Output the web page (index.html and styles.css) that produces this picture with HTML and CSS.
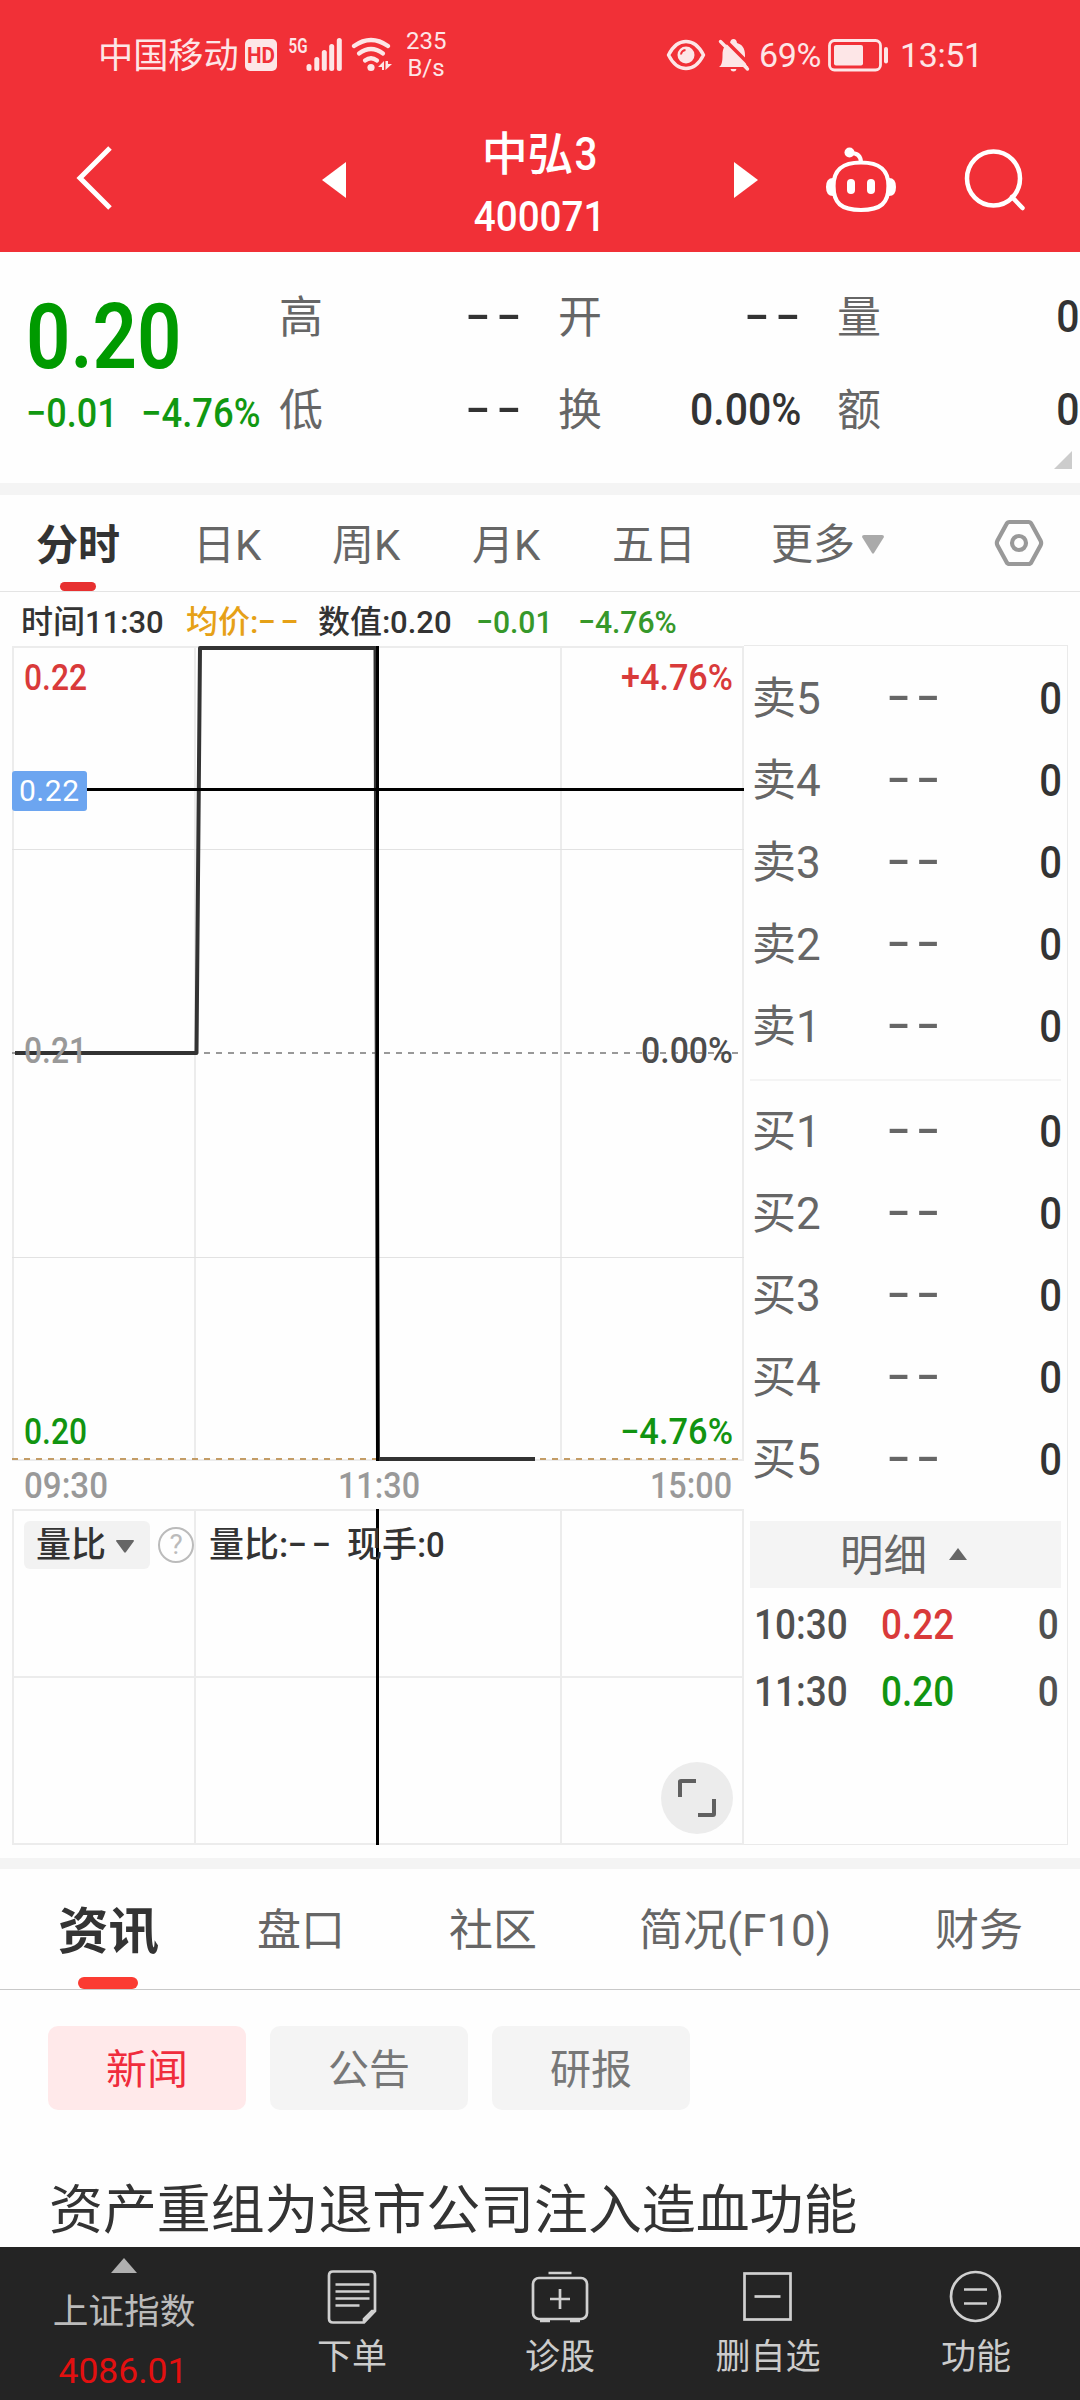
FILE: index.html
```html
<!DOCTYPE html>
<html lang="zh-CN">
<head>
<meta charset="utf-8">
<title>中弘3 400071</title>
<link rel="stylesheet" href="styles.css">
</head>
<body>
<div class="app">
  <header class="header">
    <div class="status">
      <span class="carrier">中国移动</span>
      <svg class="hd" width="34" height="34" viewBox="0 0 34 34"><rect x="1" y="1" width="32" height="32" rx="5" fill="#fde6e7"/><text x="3" y="25" font-size="22" font-weight="700" fill="#f13037" textLength="28" lengthAdjust="spacingAndGlyphs">HD</text></svg>
      <svg class="net" width="106" height="40" viewBox="0 0 106 40" fill="#fde6e7">
        <text x="0.500" y="18" font-size="21" font-weight="600" textLength="19" lengthAdjust="spacingAndGlyphs">5G</text>
        <rect x="18.5" y="29" width="5" height="7" rx="2.5"/><rect x="26.3" y="22" width="5" height="14" rx="2.5"/><rect x="33.8" y="15" width="5" height="21" rx="2.5"/><rect x="41.2" y="9" width="5" height="27" rx="2.5"/><rect x="48.8" y="3" width="5" height="33" rx="2.5"/>
        <g fill="none" stroke="#fde6e7" stroke-width="4.2" stroke-linecap="round"><path d="M66 11Q83 -1 100 11"/><path d="M71 18.5Q83 9.500 95 18.500"/><path d="M77 25.500Q83 21 89 25.500"/></g>
        <circle cx="83" cy="32.500" r="3.600"/><path d="M90 32l6-6v9h-2v-3zM97.500 26v9l6.500-6h-4v-3z"/>
      </svg>
      <span class="speed">235<br>B/s</span>
      <svg class="eye" width="40" height="34" viewBox="0 0 40 34"><path d="M2.500 17C7 8 13 3.500 20 3.500S33 8 37.500 17C33 26 27 30.500 20 30.500S7 26 2.500 17Z" fill="none" stroke="#fde6e7" stroke-width="3.400" stroke-linejoin="round"/><circle cx="20" cy="17" r="8.500" fill="#fde6e7"/><path d="M15 16.500q.5-4 4.500-4.500" fill="none" stroke="#f13037" stroke-width="2"/></svg>
      <svg class="bell" width="32" height="34" viewBox="0 0 32 34"><path d="M1 29c3-2 3.500-6 3.500-12C4.500 10 7 6.500 12 5q.5-4 3.500-4T19 5c5 1.500 8 5 8 12 0 6 .5 10 3.500 12zM12.500 31h6q-.5 2.500-3 2.500t-3-2.500z" fill="#fde6e7"/><path d="M4.500 -.5L35 30" stroke="#f13037" stroke-width="3.500"/><path d="M2.500 3.500L29.500 31" stroke="#fde6e7" stroke-width="3.400" stroke-linecap="round"/></svg>
      <span class="pct">69%</span>
      <svg class="battery" width="62" height="34" viewBox="0 0 62 34"><rect x="1.500" y="2.500" width="51" height="29.500" rx="5" fill="none" stroke="#fde6e7" stroke-width="2.800"/><rect x="6" y="7" width="29" height="20.500" rx="2" fill="#fde6e7"/><rect x="56" y="9" width="4" height="16.500" rx="2" fill="#fde6e7"/></svg>
      <span class="clock">13:51</span>
    </div>
    <div class="titlebar">
      <svg width="40" height="68" viewBox="0 0 40 68"><path d="M37 3L7 33L37 63" fill="none" stroke="#fff" stroke-width="5"/></svg>
      <svg width="24" height="36" viewBox="0 0 24 36"><path d="M24 0v36L0 18z" fill="#fff"/></svg>
      <div class="stock"><div class="name">中弘<span>3</span></div><div class="code"><span class="din">400071</span></div></div>
      <svg width="24" height="36" viewBox="0 0 24 36"><path d="M0 0v36l24-18z" fill="#fff"/></svg>
      <svg width="72" height="66" viewBox="0 0 72 66"><path d="M36 15.500C54 15.500 63.500 22 63.500 39S56 63 36 63 8.500 56 8.500 39 18 15.500 36 15.500ZM36 15q-.5-9-10-9" fill="none" stroke="#fff" stroke-width="4.200"/><circle cx="24.500" cy="5.500" r="5" fill="#fff"/><path d="M8 31q-7 0-7 9t7 9zM64 31q7 0 7 9t-7 9z" fill="#fff"/><rect x="22" y="32" width="8" height="15" rx="4" fill="#fff"/><rect x="42" y="32" width="8" height="15" rx="4" fill="#fff"/></svg>
      <svg width="62" height="64" viewBox="0 0 62 64"><ellipse cx="29.500" cy="30.500" rx="26.500" ry="27" fill="none" stroke="#fff" stroke-width="4.500"/><path d="M48 49l10.500 11" stroke="#fff" stroke-width="4.500" stroke-linecap="round"/></svg>
    </div>
  </header>

  <section class="quote">
    <div class="last">
      <div class="price"><span class="din">0.20</span></div>
      <div class="change"><span class="din">−0.01</span><span class="din">−4.76%</span></div>
    </div>
    <dl class="stats">
      <div><dt>高</dt><dd><span class="dash">--</span></dd></div>
      <div><dt>开</dt><dd><span class="dash">--</span></dd></div>
      <div><dt>量</dt><dd><span class="din">0</span></dd></div>
      <div><dt>低</dt><dd><span class="dash">--</span></dd></div>
      <div><dt>换</dt><dd><span class="din">0.00%</span></dd></div>
      <div><dt>额</dt><dd><span class="din">0</span></dd></div>
    </dl>
    <svg class="corner" width="18" height="18" viewBox="0 0 18 18"><path d="M18 0v18H0z" fill="#ccc"/></svg>
  </section>

  <nav class="periods">
    <span class="on">分时</span><span>日K</span><span>周K</span><span>月K</span><span>五日</span>
    <span class="more">更多<svg width="22" height="19" viewBox="0 0 22 19"><path d="M0 2q0-2 2-2h18q2 0 2 2L12 18q-1 1.500-2 0z" fill="#aaa"/></svg></span>
    <svg width="50" height="48" viewBox="0 0 50 48"><path d="M15.500 3h19q2 0 3 2l9 16.500q1.300 2.500 0 5L37.500 43q-1 2-3 2h-19q-2 0-3-2L3.500 26.500q-1.300-2.500 0-5L12.500 5q1-2 3-2z" fill="none" stroke="#999" stroke-width="4.200"/><circle cx="25" cy="24" r="7" fill="none" stroke="#999" stroke-width="4.200"/></svg>
  </nav>

  <div class="readout">
    <span>时间<i class="din">11:30</i></span>
    <span class="avg">均价:<i class="dash">--</i></span>
    <span>数值:<i class="din">0.20</i></span>
    <span class="down"><i class="din">−0.01</i></span>
    <span class="down"><i class="din">−4.76%</i></span>
  </div>

  <main class="market">
    <div class="charts">
      <svg class="chart" width="744" height="1200" viewBox="0 645 744 1200">
        <g class="grid">
          <path d="M12 647H744M12 1460H744M13 646V1461M195 646V1461M378 646V1461M561 646V1461M743 646V1461"/>
          <path d="M12 1510H744M12 1677H744M12 1844H744M13 1509V1845M195 1509V1845M561 1509V1845M743 1509V1845"/>
          <path class="thin" d="M12 849.500H744M12 1257.500H744"/>
        </g>
        <path d="M12 1053H740" stroke="#999" stroke-width="2" stroke-dasharray="6 6"/>
        <path d="M12 1459H740" stroke="#c39c66" stroke-width="2" stroke-dasharray="6 6"/>
        <path class="trend" d="M15 1053H196.500L200 648H375.500L378 1459H535"/>
        <path class="cross" d="M87 789.500H744M377.500 646V1461M377.500 1509V1845"/>
        <g class="label">
          <text x="24" y="690" textLength="63" lengthAdjust="spacingAndGlyphs" fill="#d93a3a">0.22</text>
          <text x="621" y="690" textLength="112" lengthAdjust="spacingAndGlyphs" fill="#d93a3a">+4.76%</text>
          <text x="24" y="1063" textLength="63" lengthAdjust="spacingAndGlyphs" fill="#999">0.21</text>
          <text x="641" y="1063" textLength="92" lengthAdjust="spacingAndGlyphs" fill="#4c4c4c">0.00%</text>
          <text x="24" y="1444" textLength="63" lengthAdjust="spacingAndGlyphs" fill="#119411">0.20</text>
          <text x="620" y="1444" textLength="113" lengthAdjust="spacingAndGlyphs" fill="#119411">−4.76%</text>
          <text x="24" y="1498" textLength="84" lengthAdjust="spacingAndGlyphs" fill="#999">09:30</text>
          <text x="338" y="1498" textLength="82" lengthAdjust="spacingAndGlyphs" fill="#999">11:30</text>
          <text x="650" y="1498" textLength="82" lengthAdjust="spacingAndGlyphs" fill="#999">15:00</text>
        </g>
        <rect x="12" y="771" width="75" height="40" rx="3" fill="#6ca5f0"/>
        <text x="19" y="801" font-size="30" fill="#fff" textLength="60">0.22</text>
        <g><circle cx="697" cy="1798" r="36" fill="#ececec"/><path d="M680 1797V1781.500Q680 1781 681 1781H696M714 1799V1814Q714 1815 713 1815H698" fill="none" stroke="#606060" stroke-width="4"/></g>
      </svg>
      <div class="volbar">
        <span class="pill">量比<svg width="18" height="13" viewBox="0 0 18 13"><path d="M0 1q0-1 1-1h16q1 0 1 1L10 12q-1 1.500-2 0z" fill="#666"/></svg></span>
        <span class="help">?</span>
        <span class="vol">量比:<i class="dash">--</i></span>
        <span class="vol">现手:<i class="din">0</i></span>
      </div>
    </div>
    <aside class="book">
      <div class="side">
        <div class="lvl"><span>卖5</span><span class="dash">--</span><b class="din">0</b></div>
        <div class="lvl"><span>卖4</span><span class="dash">--</span><b class="din">0</b></div>
        <div class="lvl"><span>卖3</span><span class="dash">--</span><b class="din">0</b></div>
        <div class="lvl"><span>卖2</span><span class="dash">--</span><b class="din">0</b></div>
        <div class="lvl"><span>卖1</span><span class="dash">--</span><b class="din">0</b></div>
      </div>
      <div class="side buy">
        <div class="lvl"><span>买1</span><span class="dash">--</span><b class="din">0</b></div>
        <div class="lvl"><span>买2</span><span class="dash">--</span><b class="din">0</b></div>
        <div class="lvl"><span>买3</span><span class="dash">--</span><b class="din">0</b></div>
        <div class="lvl"><span>买4</span><span class="dash">--</span><b class="din">0</b></div>
        <div class="lvl"><span>买5</span><span class="dash">--</span><b class="din">0</b></div>
      </div>
      <div class="detail"><span>明细</span><svg width="18" height="12" viewBox="0 0 18 12"><path d="M9 0l9 12H0z" fill="#666"/></svg></div>
      <div class="tick"><span class="din">10:30</span><span class="din up">0.22</span><span class="din">0</span></div>
      <div class="tick"><span class="din">11:30</span><span class="din dn">0.20</span><span class="din">0</span></div>
    </aside>
  </main>

  <nav class="sections">
    <span class="on">资讯</span><span>盘口</span><span>社区</span><span>简况(F10)</span><span>财务</span>
  </nav>
  <div class="chips"><span class="on">新闻</span><span>公告</span><span>研报</span></div>
  <h2 class="headline">资产重组为退市公司注入造血功能</h2>

  <footer class="toolbar">
    <div class="index">
      <svg width="26" height="15" viewBox="0 0 26 15"><path d="M13 0l13 15H0z" fill="#b0b0b0"/></svg>
      <span>上证指数</span><strong>4086.01</strong>
    </div>
    <div class="tool"><svg width="56" height="56" viewBox="0 0 56 56"><path d="M9 2.500h38q4 0 4 4V42L40 53.500H9q-4 0-4-4v-43q0-4 4-4zM51 42h-3L40 50v3.500" /><path d="M11.500 15.500h34M11.500 22.500h34M11.500 29.500h34M11.500 36.500h24"/></svg><span>下单</span></div>
    <div class="tool"><svg width="58" height="56" viewBox="0 0 58 56"><rect x="2" y="9" width="54" height="41" rx="6"/><path d="M17.500 4h23M29 20v20M19 30h20M9 52h10M39 52h10"/></svg><span>诊股</span></div>
    <div class="tool"><svg width="56" height="56" viewBox="0 0 56 56"><rect x="4.500" y="4.500" width="46" height="46"/><path d="M14.500 27.500h26"/></svg><span>删自选</span></div>
    <div class="tool"><svg width="56" height="56" viewBox="0 0 56 56"><circle cx="27.500" cy="27.500" r="24.500"/><path d="M16 20.500h23M16 34.500h23"/></svg><span>功能</span></div>
  </footer>
</div>
</body>
</html>
```
FILE: styles.css
```css
* { box-sizing: border-box; }
body {
  margin: 0;
  background: #fefefe;
  color: #333;
  font-family: Roboto, "Noto Sans CJK SC", sans-serif;
}
svg { display: block; flex: none; }
i { font-style: normal; }
.app {
  width: 1080px;
  height: 2400px;
  overflow: hidden;
  display: flex;
  flex-direction: column;
}
.din {
  display: inline-block;
  font-weight: 500;
  transform: scaleX(.94);
  transform-origin: left center;
}
.dash {
  display: inline-block;
  font-weight: 500;
  letter-spacing: .09em;
  transform: translateY(-.05em) scaleX(1.6);
  transform-origin: left center;
}

/* header */
.header { height: 252px; flex: none; background: #f13037; color: #fff; }
.status {
  height: 110px;
  display: flex;
  align-items: center;
  padding-left: 98px;
  color: #fde6e7;
  font-size: 34px;
  line-height: 40px;
}
.carrier { font-size: 35.200px; width: 146px; padding-top: 1px; white-space: nowrap; }
.hd { margin-right: 10px; }
.net { margin-right: 12px; }
.speed { width: 40px; font-size: 24px; line-height: 27.500px; text-align: center; margin-right: 220px; }
.eye { margin-right: 12px; }
.bell { margin-right: 9px; }
.pct { width: 69px; letter-spacing: -.4px; }
.battery { margin-right: 10px; }
.clock { letter-spacing: -.4px; }
.titlebar {
  height: 142px;
  display: grid;
  grid-template-columns: 249px 49px 363px 91px 139px 62px;
  align-items: center;
  padding: 0 0 3px 73px;
}
.titlebar > svg:nth-child(1) { margin-top: -1px; }
.stock { width: 220px; margin-left: 59px; padding-top: 12px; text-align: center; }
.name { font-size: 46px; font-weight: 500; line-height: 62px; letter-spacing: -.5px; }
.name span { display: inline-block; transform: scaleX(.88); }
.code { font-size: 42px; line-height: 64px; }
.code .din { transform-origin: center; transform: scaleX(.92); }

/* quote */
.quote {
  height: 231px;
  flex: none;
  display: flex;
  position: relative;
  padding-top: 18px;
}
.last { width: 279px; padding-left: 26px; color: #009a00; white-space: nowrap; }
.price { font-size: 90px; line-height: 104px; height: 104px; padding-top: 16px; }
.price .din { transform: scaleX(.865); font-weight: 600; }
.change { display: flex; font-size: 40px; line-height: 48px; padding-top: 16px; color: #119811; }
.change .din:first-child { width: 115px; }
.change .din { transform: scaleX(.9); }
.change .din:last-child { transform: scaleX(.91); }
.stats {
  margin: 0;
  display: grid;
  grid-template-columns: repeat(3, 241px);
  grid-template-rows: 93px 93px;
  column-gap: 38px;
}
.stats > div { display: flex; justify-content: space-between; font-size: 45px; line-height: 93px; }
.stats dt { font-size: 44px; color: #666; padding-top: 2px; }
.stats dd { margin: 0; }
.stats .din { transform-origin: right center; transform: translateX(2px) scaleX(.91); }
.stats .dash { transform-origin: right center; margin-right: -8px; }
.corner { position: absolute; right: 8px; bottom: 14px; }

/* period tabs */
.periods {
  height: 109px;
  flex: none;
  border-top: 12px solid #f4f4f4;
  border-bottom: 1px solid #e4e4e4;
  display: grid;
  grid-template-columns: 157px 139px 140px 140px 159px 223px 50px;
  padding-left: 36px;
  align-items: center;
  color: #666;
  font-size: 42px;
  line-height: 97px;
  white-space: nowrap;
}
.periods span { padding-top: 2px; height: 96px; }
.periods .on { color: #333; font-weight: 700; position: relative; }
.periods .on::after {
  content: "";
  position: absolute;
  left: 24px;
  bottom: 0;
  width: 36px;
  height: 9px;
  border-radius: 5px;
  background: #e73030;
}
.more { display: flex; align-items: center; gap: 7px; }

.readout {
  height: 53px;
  flex: none;
  display: grid;
  grid-template-columns: 165px 132px 158px 102px 110px;
  padding-left: 21px;
  font-size: 32px;
  line-height: 60px;
  font-weight: 500;
  white-space: nowrap;
}
.readout .din { transform: scaleX(.97); }
.readout .dash { transform: translateY(-.05em) scaleX(1.65); }
.avg { color: #e6a117; }
.down { color: #36982a; }
.readout .down .din { transform: scaleX(.94); }

/* chart and order book */
.market { height: 1213px; flex: none; display: flex; padding-bottom: 13px; }
.charts { width: 744px; position: relative; }
.grid path { fill: none; stroke: #ececec; stroke-width: 2; }
.grid .thin { stroke: #e2e2e2; stroke-width: 1; }
.trend { fill: none; stroke: #333; stroke-width: 4; stroke-linejoin: round; }
.cross { fill: none; stroke: #000; stroke-width: 3; }
.label { font-size: 36px; font-weight: 500; }
.volbar {
  position: absolute;
  left: 24px;
  top: 876px;
  height: 48px;
  display: flex;
  align-items: center;
  font-size: 35px;
  line-height: 48px;
  white-space: nowrap;
}
.pill {
  width: 126px;
  height: 48px;
  border-radius: 6px;
  background: #f2f2f2;
  display: flex;
  align-items: center;
  gap: 10px;
  padding: 2px 0 0 12px;
  font-weight: 500;
}
.help {
  width: 36px;
  height: 36px;
  margin-left: 8px;
  margin-right: 15px;
  border: 2.500px solid #bbb;
  border-radius: 50%;
  color: #bbb;
  font-size: 28px;
  line-height: 31px;
  text-align: center;
}
.vol { font-weight: 500; width: 138px; padding-top: 2px; }
.book {
  width: 324px;
  border: 1px solid #eaeaea;
  border-left: 0;
  padding: 11px 6px 0;
}
.lvl {
  height: 82px;
  display: grid;
  grid-template-columns: 135px 1fr auto;
  padding: 0 0 0 2px;
  line-height: 84px;
  font-size: 44px;
  color: #666;
}
.lvl b { color: #333; font-size: 45px; transform-origin: right center; transform: translateX(1.500px) scaleX(.89); }
.lvl .dash { transform: translateY(-.06em) scaleX(1.56); }
.side.buy { border-top: 2px solid #f4f4f4; margin-top: 12px; padding-top: 9px; }
.detail {
  margin-top: 21px;
  height: 67px;
  background: #f4f4f4;
  color: #666;
  font-size: 43.500px;
  line-height: 67px;
  display: flex;
  align-items: center;
  gap: 22px;
  padding-left: 90px;
}
.detail span { padding-top: 4px; }
.detail svg { margin-top: -2px; }
.tick {
  height: 67px;
  display: grid;
  grid-template-columns: 127px 1fr auto;
  padding: 2px 2px 0 4px;
  font-size: 42px;
  line-height: 70px;
  color: #505050;
}
.tick .din { transform: scaleX(.88); }
.tick .up { color: #d93a3a; }
.tick .dn { color: #119411; }
.tick .din:last-child { transform-origin: right center; }

/* news */
.sections {
  height: 132px;
  flex: none;
  border-top: 11px solid #f4f4f4;
  border-bottom: 1px solid #c8c8c8;
  display: grid;
  grid-template-columns: 199px 192px 190px 296px 120px;
  grid-template-rows: 120px;
  padding-left: 58px;
  font-size: 44px;
  line-height: 125px;
  color: #666;
  white-space: nowrap;
}
.sections .on { font-size: 50.500px; font-weight: 700; color: #333; position: relative; }
.sections .on::after {
  content: "";
  position: absolute;
  left: 20px;
  bottom: 0;
  width: 60px;
  height: 12px;
  border-radius: 6px;
  background: #fb3b32;
}
.chips { display: flex; gap: 24px; padding: 36px 48px 0; flex: none; }
.chips span {
  width: 198px;
  height: 84px;
  border-radius: 10px;
  background: #f4f4f4;
  color: #777;
  font-size: 41px;
  line-height: 88px;
  text-align: center;
}
.chips .on { background: #ffe9ea; color: #f02c3c; }
.headline {
  margin: 0;
  height: 137px;
  flex: none;
  padding: 65px 0 0 49px;
  font-size: 53.900px;
  line-height: 72px;
  font-weight: 400;
}

/* bottom toolbar */
.toolbar {
  height: 153px;
  flex: none;
  background: #242424;
  display: grid;
  grid-template-columns: 248px repeat(4, 208px);
  font-size: 35px;
  color: #ccc;
}
.index { display: flex; flex-direction: column; align-items: center; padding-top: 11px; }
.index span { font-size: 35.700px; line-height: 40px; margin-top: 19px; color: #bbb; }
.index strong { font-weight: 400; font-size: 35.500px; line-height: 42px; color: #e31010; margin-top: 18px; margin-right: 2px; }
.tool { display: flex; flex-direction: column; align-items: center; padding-top: 22px; }
.tool svg { fill: none; stroke: #d0d0d0; stroke-width: 2.700; }
.tool span { line-height: 40px; margin-top: 13px; }
```
